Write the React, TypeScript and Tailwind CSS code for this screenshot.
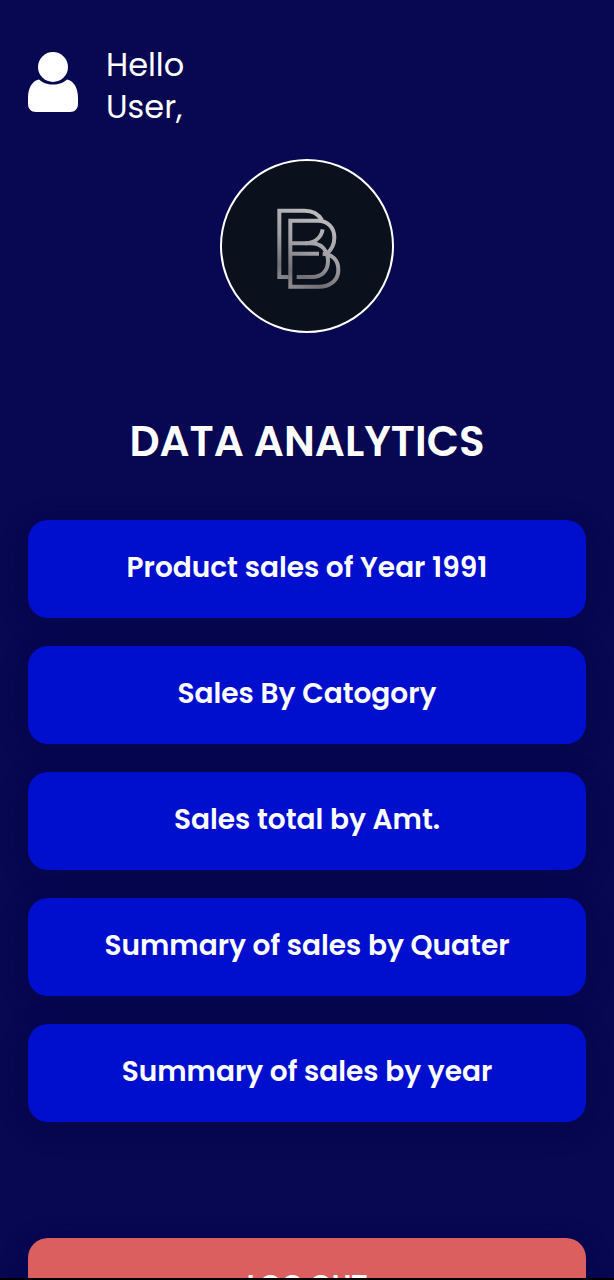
import React from "react";

const reports = [
  "Product sales of Year 1991",
  "Sales By Catogory",
  "Sales total by Amt.",
  "Summary of sales by Quater",
  "Summary of sales by year",
];

function UserIcon() {
  return (
    <svg viewBox="0 0 50 60" className="mb-2 h-[60px] w-[50px] shrink-0" fill="white" aria-hidden="true">
      <path d="M11 27.5C4 29 0 36 0 46v5.500C0 57 3 60 8 60h34c5 0 8-3 8-8.500V46c0-10-4-17-11-18.500C36 30.500 30.500 32.500 25 32.500S14 30.500 11 27.500Z" />
      <circle cx="25" cy="15" r="15" />
    </svg>
  );
}

function Logo() {
  return (
    <svg viewBox="0 0 510 510" className="h-full w-full" fill="none" role="img" aria-label="Company logo">
      <defs>
        <linearGradient id="metal" gradientUnits="userSpaceOnUse" x1="190" y1="20" x2="60" y2="265">
          <stop offset="0" stopColor="#c4c4c6" />
          <stop offset="0.500" stopColor="#a0a0a5" />
          <stop offset="0.800" stopColor="#706f76" />
          <stop offset="1" stopColor="#94949a" />
        </linearGradient>
      </defs>
      <g transform="translate(129 118)" stroke="url(#metal)" strokeWidth="12">
        <path d="M71 230H43V31H119C143 31 160 41 171 59" />
        <path d="M186 160C202 145 208 130 208 112C208 82 188 61 158 61H76V259H161C198 259 220 238 220 209C220 180 203 162 173 160" />
        <path d="M76 129H122C151 127 169 110 173 87" />
        <path d="M120 129H137C171 129 189 151 189 181C189 211 171 230 141 230H95" />
        <path d="M80 160H162" />
      </g>
    </svg>
  );
}

export default function App() {
  return (
    <div className="h-screen overflow-hidden border-b-2 border-black bg-[#070752] font-['Poppins','Inter',sans-serif] text-white">
      <main className="h-full overflow-y-auto px-7 pt-11 pb-8 [scrollbar-width:none]">
        <header className="flex items-center gap-7">
          <UserIcon />
          <p className="w-24 text-[32px] leading-[42px]">Hello User,</p>
        </header>

        <div className="mx-auto mt-[31px] size-[174px] overflow-hidden rounded-full border-2 border-white bg-[#0b101d]">
          <Logo />
        </div>

        <h1 className="mt-[81px] text-center text-[42px] leading-[56px] font-semibold">DATA ANALYTICS</h1>

        <nav aria-label="Reports" className="mt-[50px] flex flex-col gap-7">
          {reports.map((label) => (
            <button
              key={label}
              type="button"
              className="min-h-[98px] w-full rounded-[20px] bg-[#000fce] px-4 pb-0.5 text-[28px] leading-9 font-semibold shadow-[0_6px_32px_-4px_rgba(8,8,50,0.25)]"
            >
              {label}
            </button>
          ))}
        </nav>

        <button
          type="button"
          className="mt-[116px] min-h-[98px] w-full rounded-[20px] bg-[#db5f5f] px-4 pb-0.5 text-[28px] leading-9 font-semibold shadow-[0_6px_32px_-4px_rgba(8,8,50,0.25)]"
        >
          LOG OUT
        </button>
      </main>
    </div>
  );
}
